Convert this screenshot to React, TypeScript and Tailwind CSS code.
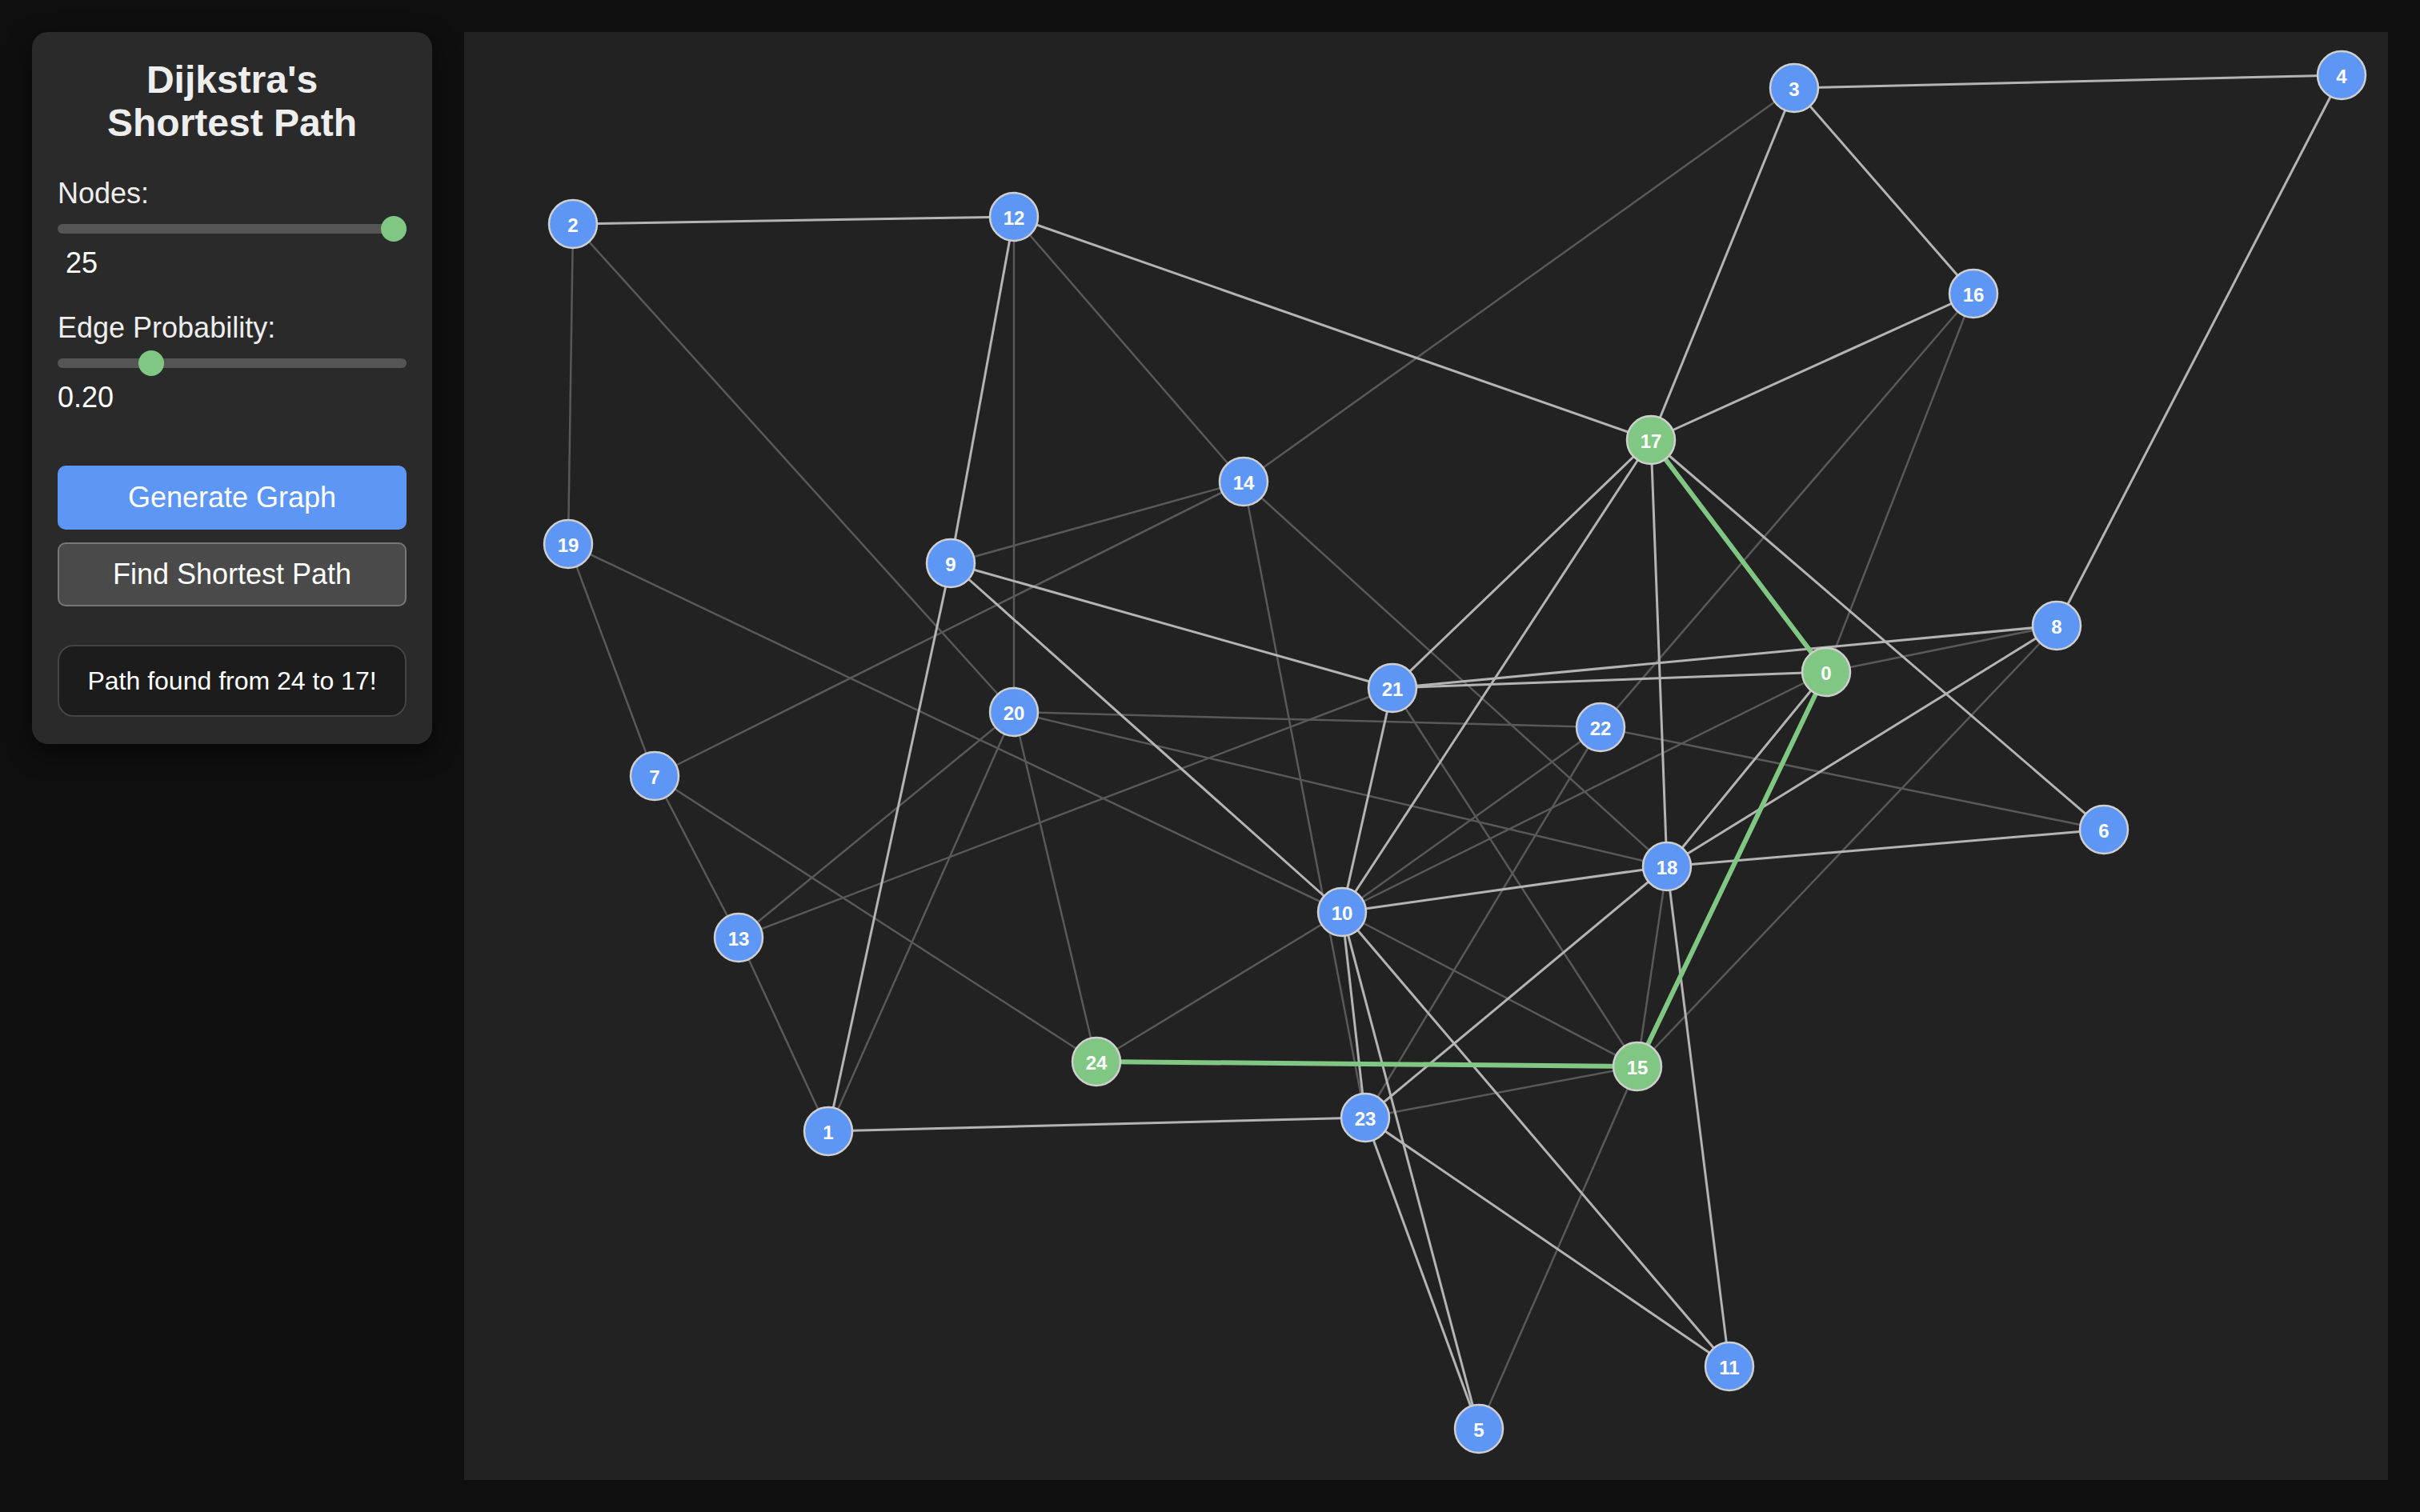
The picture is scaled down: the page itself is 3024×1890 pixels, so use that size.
import { useState } from "react"

// node positions on the canvas (px)
const NODES: [number, number][] = [
	[1702, 800], // 0
	[455, 1374], // 1
	[136, 240], // 2
	[1662, 70], // 3
	[2346, 54], // 4
	[1268, 1746], // 5
	[2049, 997], // 6
	[238, 930], // 7
	[1990, 742], // 8
	[608, 664], // 9
	[1097, 1100], // 10
	[1581, 1668], // 11
	[687, 231], // 12
	[343, 1132], // 13
	[974, 562], // 14
	[1466, 1293], // 15
	[1886, 327], // 16
	[1483, 510], // 17
	[1503, 1043], // 18
	[130, 640], // 19
	[687, 850], // 20
	[1160, 820], // 21
	[1420, 869], // 22
	[1126, 1357], // 23
	[790, 1287], // 24
]

const BRIGHT: [number, number][] = [
	[3, 4], [3, 17], [3, 16], [4, 8], [2, 12], [12, 17], [12, 9], [16, 17],
	[17, 21], [17, 10], [17, 18], [17, 6], [9, 21], [9, 10], [9, 1], [21, 0],
	[21, 8], [21, 10], [0, 18], [8, 18], [18, 6], [18, 10], [18, 23], [18, 11],
	[10, 23], [10, 5], [10, 11], [1, 23], [23, 5], [23, 11],
]

const DIM: [number, number][] = [
	[3, 14], [2, 19], [2, 20], [12, 20], [12, 14], [16, 22], [16, 0], [14, 9],
	[14, 7], [14, 18], [14, 23], [19, 7], [19, 10], [21, 13], [21, 15], [20, 22],
	[20, 18], [20, 13], [20, 1], [20, 24], [22, 6], [22, 10], [22, 23], [0, 8],
	[0, 10], [8, 15], [18, 15], [10, 24], [10, 15], [7, 13], [7, 24], [13, 1],
	[23, 15], [15, 5],
]

const PATH = [24, 15, 0, 17]

function Slider({ percent }: { percent: number }) {
	return (
		<div className="relative mt-[8px] h-[32px] w-full">
			<div className="absolute left-0 right-0 top-[10px] h-[12px] rounded-full bg-[#555555]" />
			<div
				className="absolute top-0 h-[32px] w-[32px] rounded-full bg-[#81c784]"
				style={{ left: `calc(${percent}% - ${(percent / 100) * 32}px)` }}
			/>
		</div>
	)
}

function Graph() {
	const inPath = new Set(PATH)
	return (
		<svg viewBox="0 0 2404 1810" className="block h-full w-full">
			{DIM.map(([a, b]) => (
				<line
					key={`d${a}-${b}`}
					x1={NODES[a][0]}
					y1={NODES[a][1]}
					x2={NODES[b][0]}
					y2={NODES[b][1]}
					stroke="#595959"
					strokeWidth={2.5}
				/>
			))}
			{BRIGHT.map(([a, b]) => (
				<line
					key={`b${a}-${b}`}
					x1={NODES[a][0]}
					y1={NODES[a][1]}
					x2={NODES[b][0]}
					y2={NODES[b][1]}
					stroke="#b4b4b4"
					strokeWidth={3}
				/>
			))}
			{PATH.slice(1).map((b, i) => {
				const a = PATH[i]
				return (
					<line
						key={`p${a}-${b}`}
						x1={NODES[a][0]}
						y1={NODES[a][1]}
						x2={NODES[b][0]}
						y2={NODES[b][1]}
						stroke="#81c784"
						strokeWidth={6}
					/>
				)
			})}
			{NODES.map(([x, y], i) => (
				<g key={i}>
					<circle
						cx={x}
						cy={y}
						r={30}
						fill={inPath.has(i) ? "#81c784" : "#5e96f6"}
						stroke="#cfcfcf"
						strokeWidth={2.5}
					/>
					<text
						x={x}
						y={y + 1}
						textAnchor="middle"
						dominantBaseline="central"
						fill="#ffffff"
						fontSize={24}
						fontWeight={700}
						fontFamily="'Liberation Sans', Arial, sans-serif"
					>
						{i}
					</text>
				</g>
			))}
		</svg>
	)
}

export default function App() {
	const [nodes] = useState(25)
	const [prob] = useState(0.2)

	return (
		<div className="flex h-screen gap-[40px] bg-[#0f0f0f] p-[40px] font-['Liberation_Sans',Arial,sans-serif] text-white">
			<div className="flex w-[500px] shrink-0 flex-col self-start rounded-[20px] bg-[#2a2a2a] px-[32px] pb-[34px] pt-[33px] shadow-[0_10px_30px_rgba(0,0,0,0.55)]">
				<h2 className="text-center text-[48px] font-bold leading-[54px] text-[#eeeeee]">
					Dijkstra's
					<br />
					Shortest Path
				</h2>

				<div className="mt-[40px] text-[36px] leading-[41px] text-[#eeeeee]">Nodes:</div>
				<Slider percent={100} />
				<div className="ml-[10px] mt-[6px] text-[36px] leading-[41px]">{nodes}</div>

				<div className="mt-[40px] text-[36px] leading-[41px] text-[#eeeeee]">Edge Probability:</div>
				<Slider percent={25} />
				<div className="mt-[6px] text-[36px] leading-[41px]">{prob.toFixed(2)}</div>

				<button className="mt-[65px] h-[80px] w-full rounded-[10px] bg-[#5e96f6] text-[36px] text-white">
					Generate Graph
				</button>
				<button className="mt-[16px] h-[80px] w-full rounded-[10px] border-2 border-[#777777] bg-[#4a4a4a] text-[36px] text-white">
					Find Shortest Path
				</button>

				<div className="mt-[48px] flex h-[90px] items-center justify-center rounded-[20px] border-2 border-[#444444] bg-[#1c1c1c] text-[32px]">
					Path found from 24 to 17!
				</div>
			</div>

			<div className="flex-1 bg-[#222222]">
				<Graph />
			</div>
		</div>
	)
}
